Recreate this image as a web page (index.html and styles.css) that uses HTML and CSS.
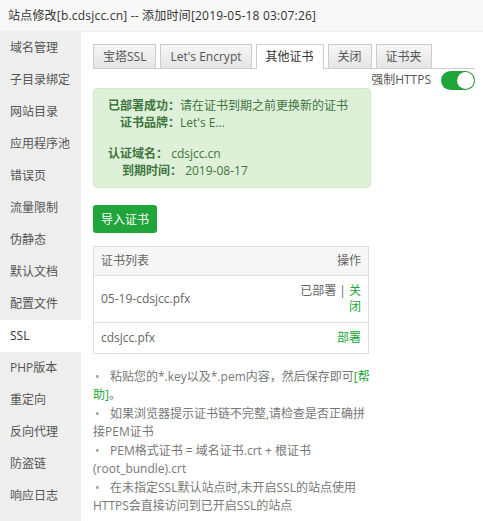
FILE: index.html
```html
<!DOCTYPE html>
<html lang="zh-CN">
<head>
  <meta charset="UTF-8">
  <meta name="viewport" content="width=device-width, initial-scale=1.0">
  <title>站点修改</title>
  <link rel="stylesheet" href="styles.css">
</head>
<body>
  <div class="title">站点修改[b.cdsjcc.cn] -- 添加时间[2019-05-18 03:07:26]</div>
  <div class="main">
    <ul class="side">
      <li>域名管理</li>
      <li>子目录绑定</li>
      <li>网站目录</li>
      <li>应用程序池</li>
      <li>错误页</li>
      <li>流量限制</li>
      <li>伪静态</li>
      <li>默认文档</li>
      <li>配置文件</li>
      <li class="active">SSL</li>
      <li>PHP版本</li>
      <li>重定向</li>
      <li>反向代理</li>
      <li>防盗链</li>
      <li>响应日志</li>
    </ul>
    <div class="content">
      <div class="tabs">
        <span class="tab">宝塔SSL</span>
        <span class="tab">Let's Encrypt</span>
        <span class="tab on">其他证书</span>
        <span class="tab">关闭</span>
        <span class="tab">证书夹</span>
      </div>
      <div class="force">
        <span>强制HTTPS</span>
        <span class="switch"><i></i></span>
      </div>
      <div class="alert">
        <div class="group">
          <div><b>已部署成功：</b>请在证书到期之前更换新的证书</div>
          <div class="ind1"><b>证书品牌：</b>Let's E...</div>
        </div>
        <div class="group">
          <div><b>认证域名：</b> cdsjcc.cn</div>
          <div class="ind2"><b>到期时间：</b> 2019-08-17</div>
        </div>
      </div>
      <button class="btn">导入证书</button>
      <table class="certs">
        <thead>
          <tr><th>证书列表</th><th class="ops">操作</th></tr>
        </thead>
        <tbody>
          <tr>
            <td>05-19-cdsjcc.pfx</td>
            <td class="ops"><div class="ops-box">已部署 | <a>关</a><br><a>闭</a></div></td>
          </tr>
          <tr>
            <td>cdsjcc.pfx</td>
            <td class="ops"><a>部署</a></td>
          </tr>
        </tbody>
      </table>
      <ul class="notes">
        <li>粘贴您的*.key以及*.pem内容，然后保存即可<a>[帮</a><a>助]</a>。</li>
        <li>如果浏览器提示证书链不完整,请检查是否正确拼接PEM证书</li>
        <li>PEM格式证书 = 域名证书.crt + 根证书(root_bundle).crt</li>
        <li>在未指定SSL默认站点时,未开启SSL的站点使用HTTPS会直接访问到已开启SSL的站点</li>
      </ul>
    </div>
  </div>
</body>
</html>
```

FILE: styles.css
```css
body {
  margin: 0;
  font-family: "Open Sans", "Noto Sans CJK SC", sans-serif;
  font-size: 12px;
  color: #555555;
  background-color: #ffffff;
  height: 521px;
  overflow: hidden;
}
.title {
  height: 31px;
  line-height: 31px;
  padding-left: 8px;
  background-color: #f8f8f8;
  border-bottom: 1px solid #eeeeee;
  color: #333333;
  letter-spacing: 0.2px;
}
.main {
  display: flex;
  height: 489px;
}
.side {
  list-style: none;
  margin: 0;
  padding: 0;
  width: 81px;
  background-color: #eeeeee;
}
.side li {
  height: 32px;
  line-height: 32px;
  padding-left: 10px;
  color: #555555;
}
.side li.active {
  background-color: #ffffff;
  color: #333333;
}
.content {
  flex: 1;
  padding: 12px 8px 0 12px;
}
.tabs {
  display: flex;
  gap: 4px;
  border-bottom: 1px solid #cccccc;
  height: 24px;
}
.tab {
  height: 23px;
  line-height: 23px;
  padding: 0 9px;
  border: 1px solid #cccccc;
  border-bottom: none;
  background: linear-gradient(#f6f6f6, #e4e4e4);
  color: #555555;
}
.tab.on {
  height: 24px;
  background: #ffffff;
  color: #333333;
}
.force {
  display: flex;
  justify-content: flex-end;
  align-items: center;
  gap: 10px;
  height: 18px;
  margin-top: 1px;
  color: #555555;
}
.switch {
  width: 34px;
  height: 19px;
  border-radius: 10px;
  background-color: #20a53a;
  position: relative;
  margin-top: 2px;
}
.switch i {
  position: absolute;
  right: 1px;
  top: 1px;
  width: 17px;
  height: 17px;
  border-radius: 50%;
  background-color: #ffffff;
  box-shadow: 0 0 1px rgba(0,0,0,0.4);
}
.alert {
  width: 248px;
  padding: 8px 14px 8px;
  background-color: #dff0d8;
  border: 1px solid #d6e9c6;
  border-radius: 4px;
  color: #3c763d;
  line-height: 17px;
}
.alert .group + .group {
  margin-top: 14px;
}
.ind1 {
  padding-left: 12px;
}
.ind2 {
  padding-left: 14px;
}
.btn {
  display: block;
  margin-top: 17px;
  height: 28px;
  padding: 0 8px;
  border: none;
  border-radius: 3px;
  background-color: #20a53a;
  color: #ffffff;
  font-family: inherit;
  font-size: 12px;
}
.certs {
  margin-top: 13px;
  width: 276px;
  border-collapse: collapse;
  border: 1px solid #dddddd;
  line-height: 16px;
  color: #666666;
}
.certs th {
  font-weight: normal;
  text-align: left;
  background-color: #f6f6f6;
  padding: 6px 7px;
  border-bottom: 1px solid #dddddd;
}
.certs td {
  padding: 7px 7px;
  border-bottom: 1px solid #dddddd;
}
.certs .ops {
  text-align: right;
}
.ops-box {
  margin-left: auto;
}
.certs a, .notes a {
  color: #20a53a;
}
.notes {
  list-style: none;
  margin: 14px 0 0;
  padding: 0;
  width: 277px;
  line-height: 18px;
  color: #777777;
}
.notes li {
  margin-bottom: 1px;
}
.notes li::before {
  content: "•";
  display: inline-block;
  width: 17px;
  padding-left: 2px;
  box-sizing: border-box;
  color: #999999;
}
```
